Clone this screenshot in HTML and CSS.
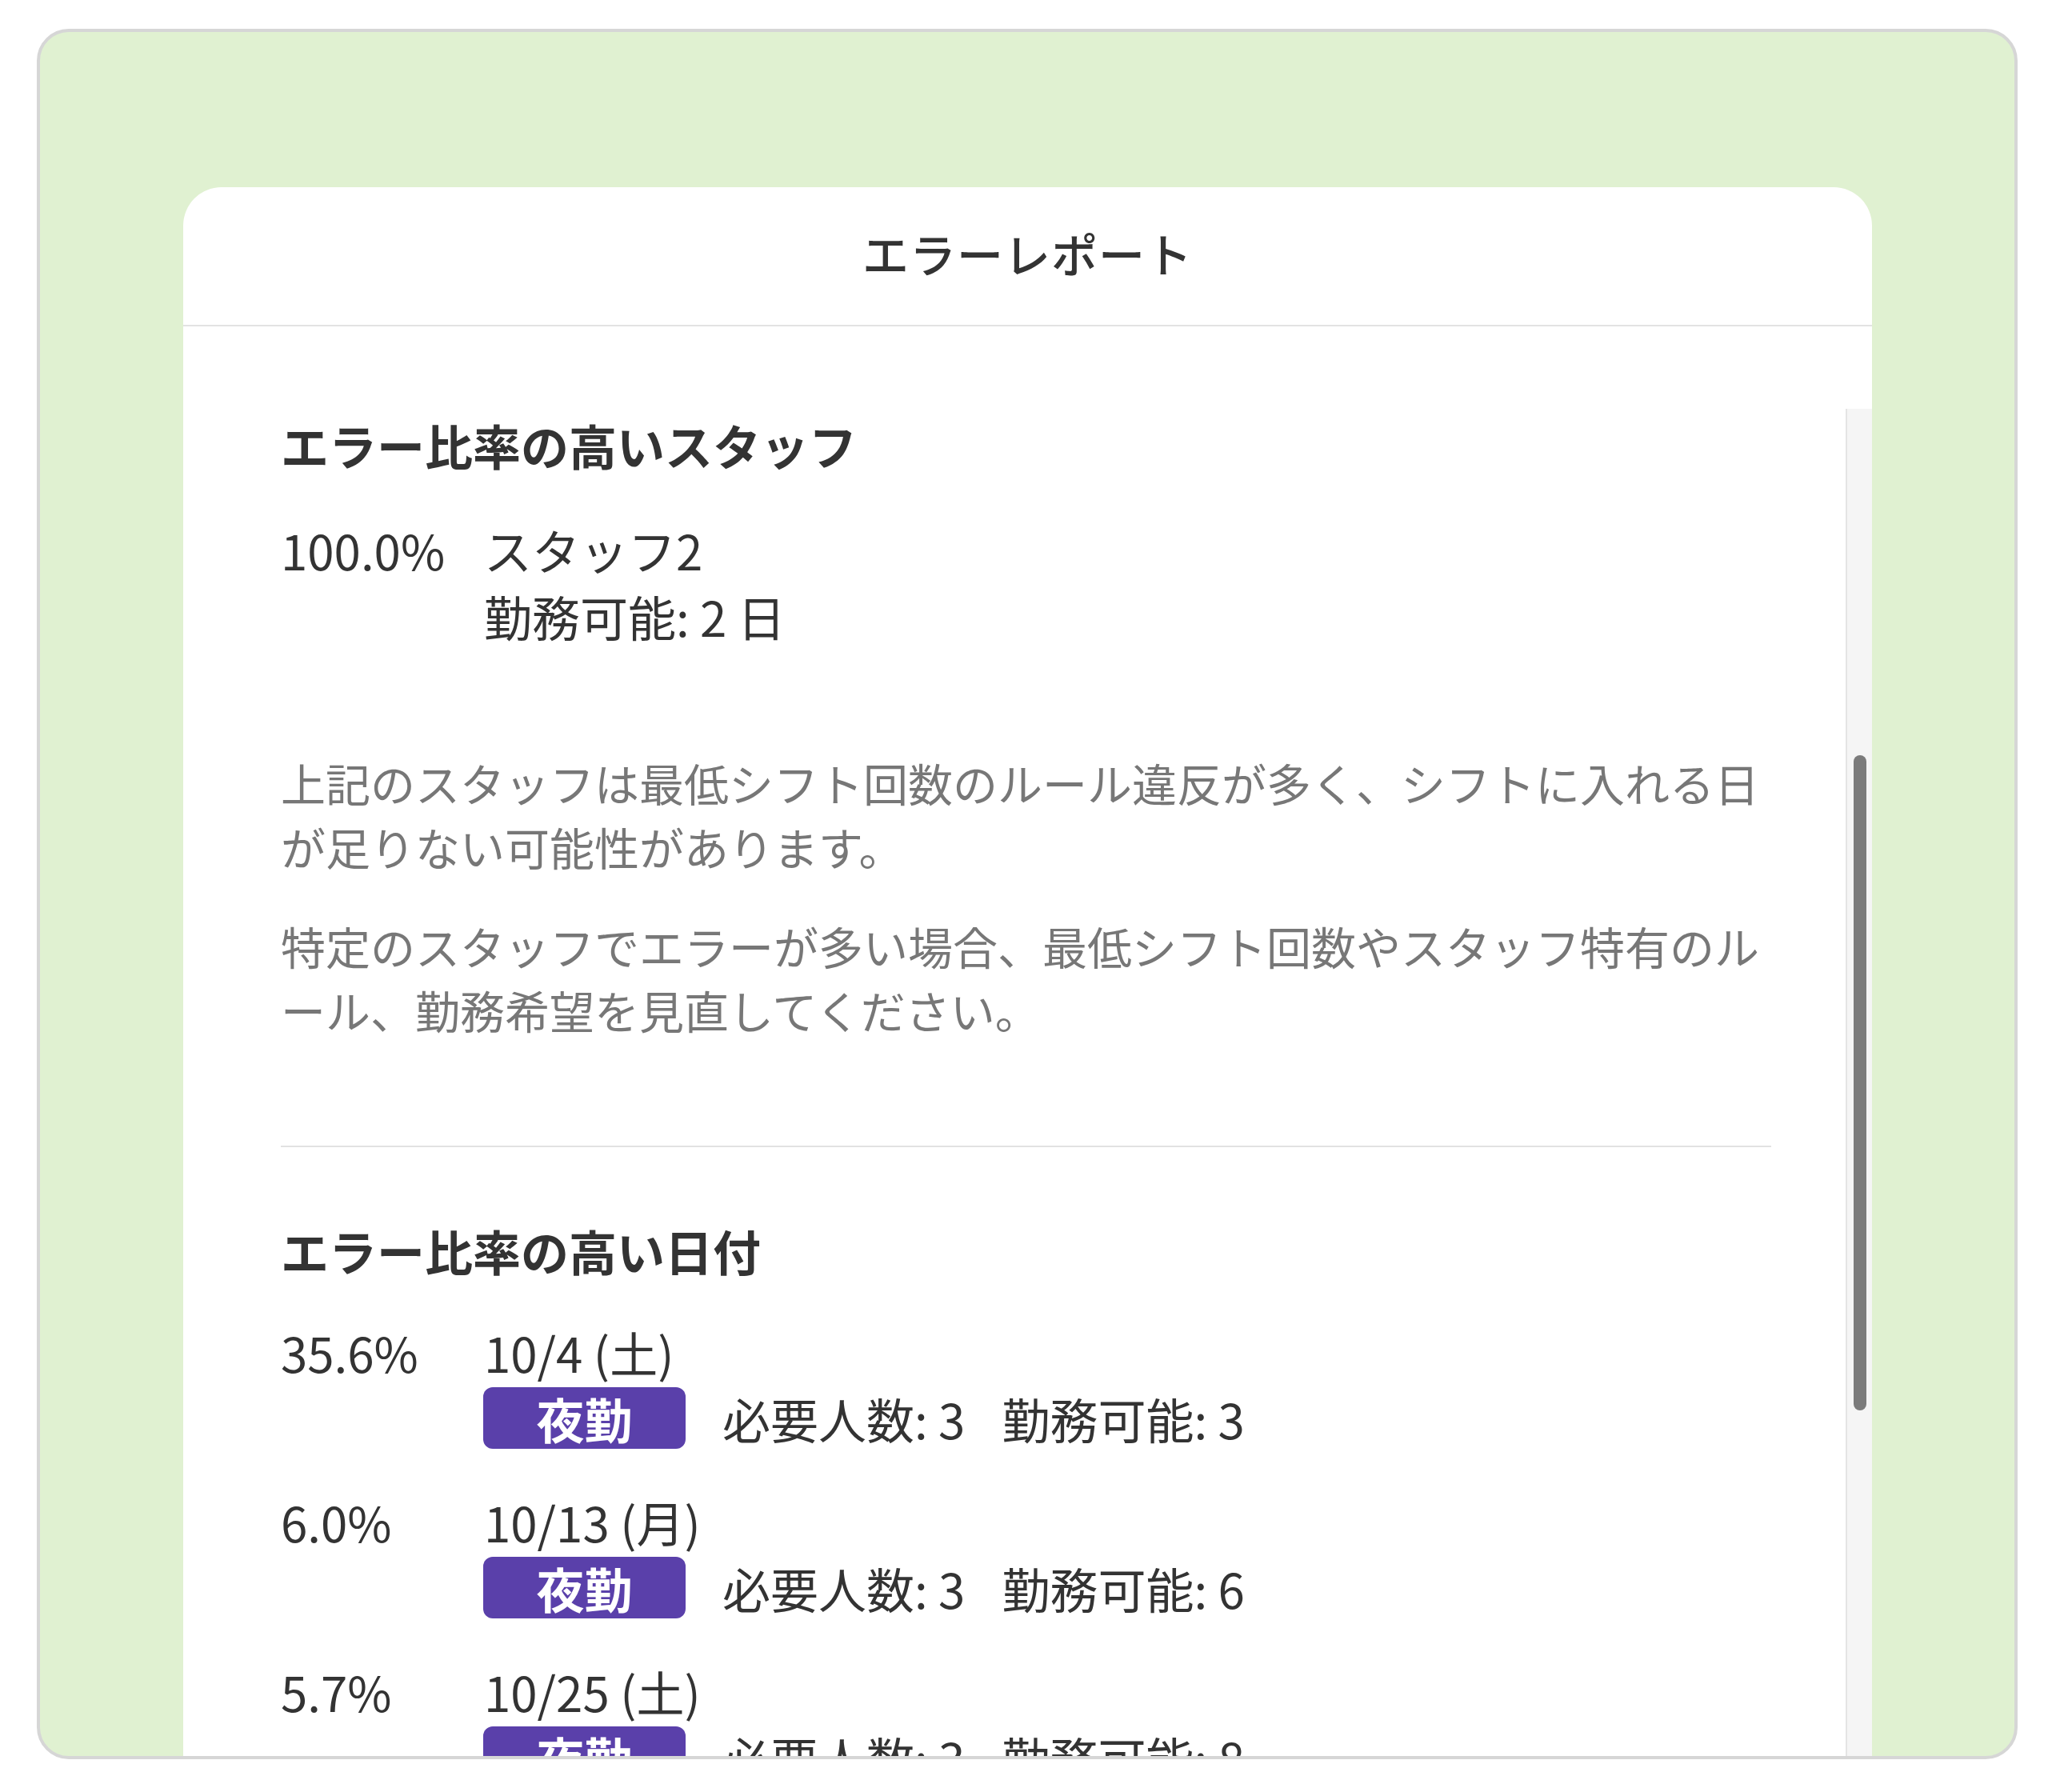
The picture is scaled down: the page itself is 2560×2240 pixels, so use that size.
FILE: index.html
```html
<!DOCTYPE html>
<html lang="ja">
<head>
<meta charset="utf-8">
<title>エラーレポート</title>
<link rel="stylesheet" href="styles.css">
</head>
<body>
<div class="frame">
  <div class="card">
    <div class="card-header">
      <h2 class="title">エラーレポート</h2>
    </div>
    <div class="card-body">
      <div class="scroll">
        <div class="content">
          <section class="section">
            <h3 class="heading">エラー比率の高いスタッフ</h3>
            <div class="row staff-row">
              <div class="pct">100.0%</div>
              <div class="detail">
                <div class="line">スタッフ2</div>
                <div class="line">勤務可能: 2 日</div>
              </div>
            </div>
            <p class="note first">上記のスタッフは最低シフト回数のルール違反が多く、シフトに入れる日が足りない可能性があります。</p>
            <p class="note">特定のスタッフでエラーが多い場合、最低シフト回数やスタッフ特有のルール、勤務希望を見直してください。</p>
          </section>
          <hr class="divider">
          <section class="section">
            <h3 class="heading heading-dates">エラー比率の高い日付</h3>
            <div class="date-list">
              <div class="row">
                <div class="pct">35.6%</div>
                <div class="detail">
                  <div class="line">10/4 (土)</div>
                  <div class="badge-line">
                    <span class="badge">夜勤</span>
                    <span>必要人数: 3</span>
                    <span>勤務可能: 3</span>
                  </div>
                </div>
              </div>
              <div class="row">
                <div class="pct">6.0%</div>
                <div class="detail">
                  <div class="line">10/13 (月)</div>
                  <div class="badge-line">
                    <span class="badge">夜勤</span>
                    <span>必要人数: 3</span>
                    <span>勤務可能: 6</span>
                  </div>
                </div>
              </div>
              <div class="row">
                <div class="pct">5.7%</div>
                <div class="detail">
                  <div class="line">10/25 (土)</div>
                  <div class="badge-line">
                    <span class="badge">夜勤</span>
                    <span>必要人数: 3</span>
                    <span>勤務可能: 8</span>
                  </div>
                </div>
              </div>
            </div>
          </section>
        </div>
        <div class="scrollbar"><div class="thumb"></div></div>
      </div>
    </div>
  </div>
</div>
</body>
</html>
```
FILE: styles.css
```css
html, body {
  margin: 0;
  padding: 0;
  background: #ffffff;
}

body {
  font-family: "Noto Sans CJK JP", "Noto Sans", sans-serif;
  color: #333333;
}

.frame {
  margin: 36px 0 0 46px;
  width: 2476px;
  height: 2163px;
  box-sizing: border-box;
  border: 4px solid #d6d6d6;
  border-radius: 40px;
  background: #e0f1d1;
  overflow: hidden;
  padding: 194px 178px 0 179px;
}

.card {
  background: #ffffff;
  border-radius: 48px 48px 0 0;
  height: 2200px;
  display: flex;
  flex-direction: column;
}

.card-header {
  height: 174px;
  box-sizing: border-box;
  padding-bottom: 8px;
  flex-shrink: 0;
  border-bottom: 2px solid #e3e3e3;
  display: flex;
  align-items: center;
  justify-content: center;
}

.title {
  margin: 0;
  font-size: 58px;
  font-weight: 500;
  letter-spacing: 1px;
  color: #333333;
  line-height: 1;
}

.card-body {
  flex: 1;
  padding-top: 103px;
  display: flex;
  min-height: 0;
}

.scroll {
  flex: 1;
  display: flex;
}

.content {
  flex: 1;
  padding: 0 93px 0 122px;
}

.scrollbar {
  width: 31px;
  flex-shrink: 0;
  border-left: 2px solid #e4e4e4;
  background: #f5f5f5;
  padding-top: 433px;
}

.thumb {
  width: 16px;
  height: 819px;
  margin-left: 8px;
  background: #7b7b7b;
  border-radius: 8px;
}

.heading {
  margin: 0;
  font-size: 60px;
  line-height: 90px;
  font-weight: 700;
  color: #333333;
}

.row {
  display: flex;
  font-size: 60px;
  line-height: 83px;
  color: #333333;
}

.staff-row {
  margin-top: 44px;
}

.pct {
  width: 254px;
  flex-shrink: 0;
}

.detail {
  display: flex;
  flex-direction: column;
}

.note {
  margin: 44px 0 0;
  font-size: 56px;
  line-height: 80px;
  color: #777777;
  line-break: loose;
}

.note.first {
  margin-top: 127px;
}

.divider {
  margin: 130px 0 0;
  border: none;
  height: 2px;
  background: #e2e2e2;
}

.heading-dates {
  margin-top: 84px;
}

.date-list {
  margin-top: 40px;
  display: flex;
  flex-direction: column;
  gap: 46px;
}

.badge-line {
  display: flex;
  align-items: center;
  height: 83px;
  gap: 46px;
  white-space: nowrap;
}

.badge {
  width: 253px;
  height: 77px;
  background: #5a40aa;
  color: #ffffff;
  border-radius: 12px;
  font-weight: 700;
  font-size: 60px;
  display: flex;
  align-items: center;
  justify-content: center;
  margin-left: -1px;
}
```
